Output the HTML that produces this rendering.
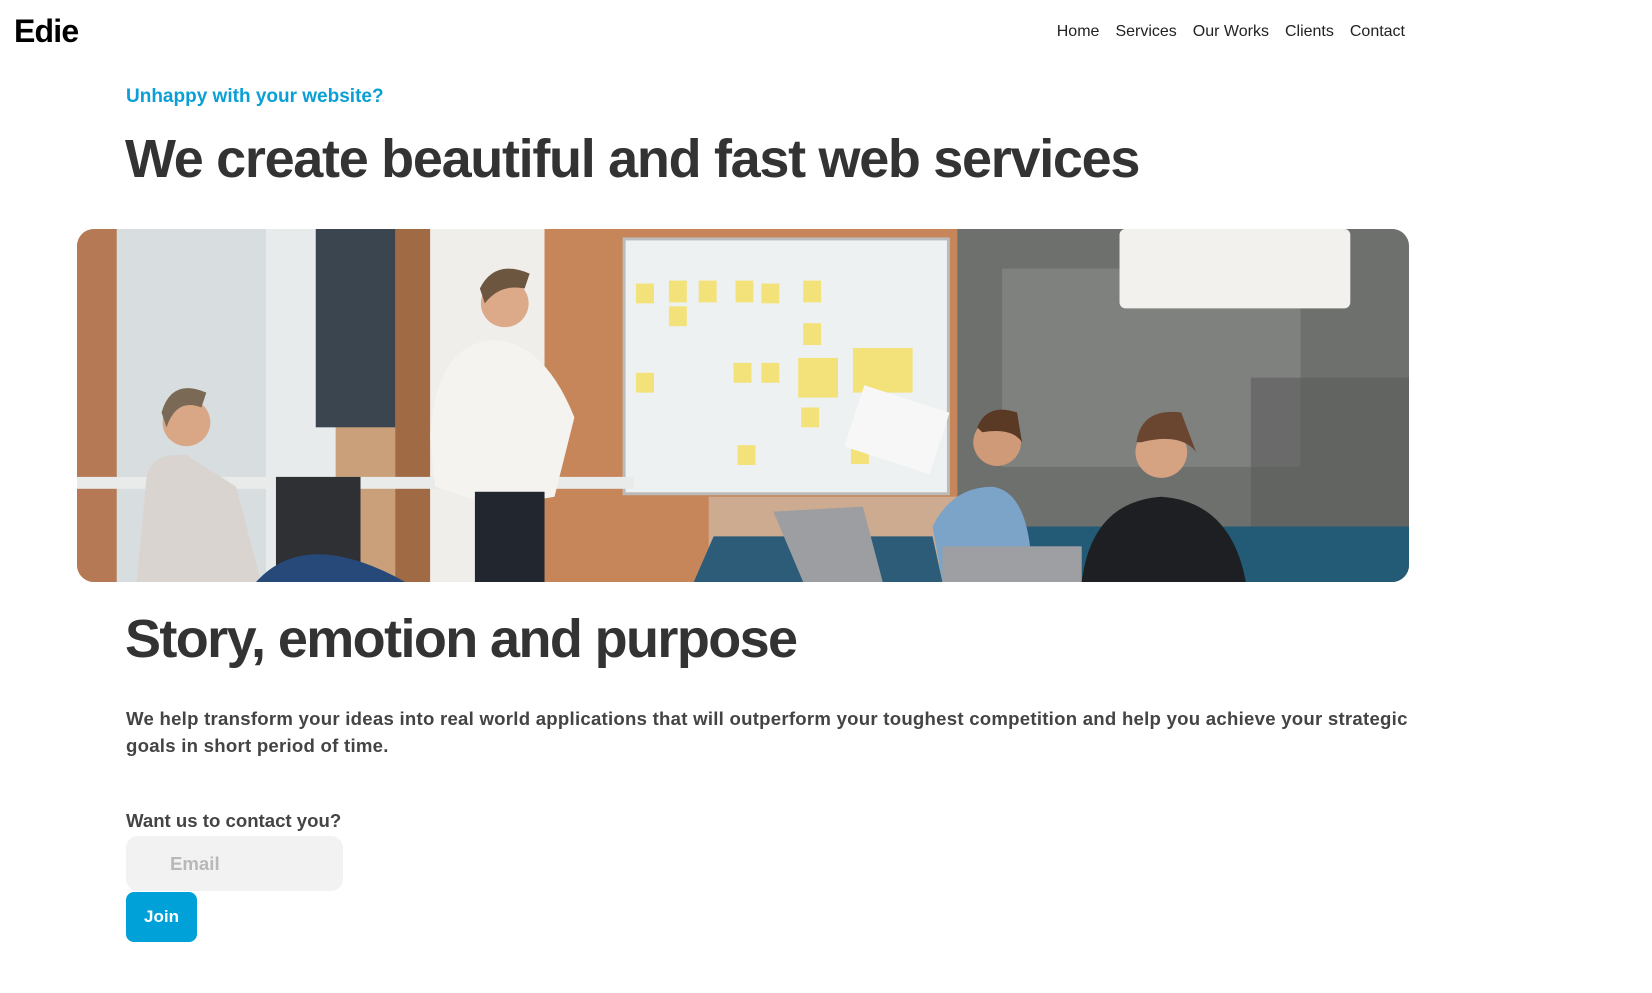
<!DOCTYPE html>
<html><head><meta charset="utf-8"><style>
*{margin:0;padding:0;box-sizing:border-box}
body{width:1652px;height:993px;background:#fff;font-family:"Liberation Sans",Arial,sans-serif;position:relative;overflow:hidden;color:#333}
.logo{position:absolute;left:14px;top:13px;font-size:32px;font-weight:700;color:#000;letter-spacing:-0.8px}
.nav{position:absolute;top:23px;right:247px;font-size:16px;color:#222;display:flex;gap:16px}
.kick{position:absolute;left:126px;top:86px;font-size:19px;color:#0a9fd6;font-weight:600}
h1{position:absolute;left:125px;top:128px;font-size:54px;font-weight:600;color:#333;letter-spacing:-1.3px;white-space:nowrap}
.img{position:absolute;left:77px;top:229px;width:1332px;height:353px;border-radius:17px;overflow:hidden}
h2{position:absolute;left:125px;top:608px;font-size:54px;font-weight:600;color:#333;letter-spacing:-1.6px;white-space:nowrap}
p{position:absolute;left:126px;top:705px;width:1320px;font-size:18.6px;line-height:27px;color:#444;font-weight:600;letter-spacing:0.25px}
.want{position:absolute;left:126px;top:810px;font-size:18.6px;font-weight:600;color:#444}
.email{position:absolute;left:126px;top:836px;width:217px;height:55px;border-radius:12px;background:#f2f2f2;color:#b8b8b8;font-size:18.6px;font-weight:600;padding:17px 0 0 44px}
.join{position:absolute;left:126px;top:892px;width:71px;height:50px;border-radius:8px;background:#00a0d8;color:#fff;font-size:17px;font-weight:600;text-align:center;line-height:50px}
</style></head><body>
<div class="logo">Edie</div>
<div class="nav"><span>Home</span><span>Services</span><span>Our Works</span><span>Clients</span><span>Contact</span></div>
<div class="kick">Unhappy with your website?</div>
<h1>We create beautiful and fast web services</h1>
<div class="img"><svg width="1332" height="353" viewBox="0 0 1339 356" preserveAspectRatio="none">
<rect width="1339" height="356" fill="#c9a07a"/>
<rect x="0" width="40" height="356" fill="#b57a55"/>
<rect x="40" width="150" height="356" fill="#d8dde0"/>
<rect x="190" width="70" height="356" fill="#e8ebec"/>
<rect x="240" y="0" width="80" height="200" fill="#3a4550"/>
<rect x="320" width="35" height="356" fill="#a06a45"/>
<rect x="355" width="115" height="356" fill="#efeeea"/>
<rect x="470" width="420" height="356" fill="#c7865a"/>
<rect x="885" width="454" height="356" fill="#6e706e"/>
<rect x="930" y="40" width="300" height="200" fill="#8a8c8a" opacity=".6"/>
<rect x="1180" y="150" width="159" height="150" fill="#5a5c5a" opacity=".6"/>
<rect x="1048" y="0" width="232" height="80" rx="6" fill="#f2f1ee"/>
<rect x="550" y="10" width="326" height="257" fill="#eef1f1" stroke="#bbb" stroke-width="3"/>
<g fill="#f3e27a"><rect x="562" y="55" width="18" height="20"/><rect x="595" y="52" width="18" height="22"/><rect x="625" y="52" width="18" height="22"/><rect x="662" y="52" width="18" height="22"/><rect x="688" y="55" width="18" height="20"/><rect x="730" y="52" width="18" height="22"/><rect x="595" y="78" width="18" height="20"/><rect x="730" y="95" width="18" height="22"/><rect x="562" y="145" width="18" height="20"/><rect x="660" y="135" width="18" height="20"/><rect x="688" y="135" width="18" height="20"/><rect x="725" y="130" width="40" height="40"/><rect x="780" y="120" width="60" height="45"/><rect x="728" y="180" width="18" height="20"/><rect x="664" y="218" width="18" height="20"/><rect x="778" y="217" width="18" height="20"/></g>
<rect x="780" y="170" width="90" height="65" fill="#f7f7f7" transform="rotate(18 825 200)"/>
<rect x="0" y="250" width="560" height="12" fill="#e9ebea"/>
<path d="M60 356 L70 250 Q75 225 110 228 L160 260 L185 356Z" fill="#d9d4d0"/>
<circle cx="110" cy="195" r="24" fill="#d9a786"/><path d="M85 185 Q95 150 130 165 L125 180 Q100 170 90 200Z" fill="#7a6a55"/>
<rect x="200" y="250" width="85" height="106" fill="#2e3033"/>
<path d="M180 356 Q230 300 330 356Z" fill="#26497a"/>
<path d="M355 210 Q360 115 420 112 Q470 115 500 190 L480 270 L420 280 L360 260Z" fill="#f4f3f0"/>
<rect x="400" y="265" width="70" height="91" fill="#22262e"/>
<circle cx="430" cy="75" r="24" fill="#dcaa88"/><path d="M405 60 Q420 30 455 45 L450 60 Q425 55 410 75Z" fill="#6d5640"/>
<rect x="635" y="270" width="260" height="86" fill="#d2cfc8" opacity=".5"/>
<path d="M620 356 L640 310 L860 310 L870 356Z" fill="#2c5c78"/>
<path d="M870 356 L880 300 L1339 300 L1339 356Z" fill="#235a76"/>
<path d="M700 285 L790 280 L810 356 L730 356Z" fill="#9c9ea1"/>
<path d="M860 300 Q880 260 920 260 Q960 265 960 356 L870 356Z" fill="#7ca4c8"/>
<circle cx="925" cy="215" r="24" fill="#cf9a78"/><path d="M905 200 Q915 175 945 185 L950 215 Q940 200 910 205Z" fill="#5a3a25"/>
<rect x="870" y="320" width="140" height="36" fill="#9d9fa2"/>
<path d="M1010 356 Q1020 275 1090 270 Q1160 275 1175 356Z" fill="#1e1f22"/>
<circle cx="1090" cy="225" r="26" fill="#d5a282"/><path d="M1065 215 Q1070 180 1110 185 L1125 225 Q1110 205 1070 215Z" fill="#6a4530"/>
</svg></div>
<h2>Story, emotion and purpose</h2>
<p>We help transform your ideas into real world applications that will outperform your toughest competition and help you achieve your strategic goals in short period of time.</p>
<div class="want">Want us to contact you?</div>
<div class="email">Email</div>
<div class="join">Join</div>
</body></html>
